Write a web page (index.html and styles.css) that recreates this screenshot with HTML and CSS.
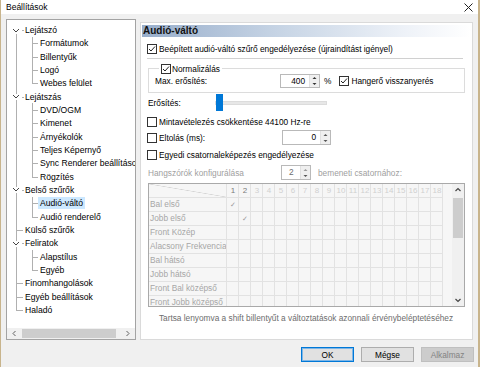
FILE: index.html
```html
<!DOCTYPE html>
<html>
<head>
    <meta charset="UTF-8">
    <title>Beállítások</title>
    <link rel="stylesheet" href="styles.css">
</head>
<body>
<div class="window">
    <div class="titlebar">
        <span class="title">Beállítások</span>
        <svg class="close" width="9" height="9" viewBox="0 0 9 9"><path d="M0.5 0.5 L8.5 8.5 M8.5 0.5 L0.5 8.5" stroke="#222" stroke-width="1" fill="none"/></svg>
    </div>

    <div class="main">
        <!-- bal oldali fa -->
        <div class="treebox">
            <ul class="tree">
                <li class="open first">
                    <div class="row"><svg class="twisty" width="8" height="6" viewBox="0 0 8 6"><rect width="8" height="6" fill="#fff"/><path d="M1 1 L4 4 L7 1" stroke="#444" fill="none"/></svg><span class="label">Lejátszó</span></div>
                    <ul>
                        <li><div class="row"><span class="label">Formátumok</span></div></li>
                        <li><div class="row"><span class="label">Billentyűk</span></div></li>
                        <li><div class="row"><span class="label">Logó</span></div></li>
                        <li><div class="row"><span class="label">Webes felület</span></div></li>
                    </ul>
                </li>
                <li class="open">
                    <div class="row"><svg class="twisty" width="8" height="6" viewBox="0 0 8 6"><rect width="8" height="6" fill="#fff"/><path d="M1 1 L4 4 L7 1" stroke="#444" fill="none"/></svg><span class="label">Lejátszás</span></div>
                    <ul>
                        <li><div class="row"><span class="label">DVD/OGM</span></div></li>
                        <li><div class="row"><span class="label">Kimenet</span></div></li>
                        <li><div class="row"><span class="label">Árnyékolók</span></div></li>
                        <li><div class="row"><span class="label">Teljes Képernyő</span></div></li>
                        <li><div class="row"><span class="label">Sync Renderer beállítások</span></div></li>
                        <li><div class="row"><span class="label">Rögzítés</span></div></li>
                    </ul>
                </li>
                <li class="open">
                    <div class="row"><svg class="twisty" width="8" height="6" viewBox="0 0 8 6"><rect width="8" height="6" fill="#fff"/><path d="M1 1 L4 4 L7 1" stroke="#444" fill="none"/></svg><span class="label">Belső szűrők</span></div>
                    <ul>
                        <li><div class="row"><span class="label selected">Audió-váltó</span></div></li>
                        <li><div class="row"><span class="label">Audió renderelő</span></div></li>
                    </ul>
                </li>
                <li><div class="row"><span class="label">Külső szűrők</span></div></li>
                <li class="open">
                    <div class="row"><svg class="twisty" width="8" height="6" viewBox="0 0 8 6"><rect width="8" height="6" fill="#fff"/><path d="M1 1 L4 4 L7 1" stroke="#444" fill="none"/></svg><span class="label">Feliratok</span></div>
                    <ul>
                        <li><div class="row"><span class="label">Alapstílus</span></div></li>
                        <li><div class="row"><span class="label">Egyéb</span></div></li>
                    </ul>
                </li>
                <li><div class="row"><span class="label">Finomhangolások</span></div></li>
                <li><div class="row"><span class="label">Egyéb beállítások</span></div></li>
                <li><div class="row"><span class="label">Haladó</span></div></li>
            </ul>
            <div class="hscroll">
                <svg width="11" height="11" viewBox="0 0 11 11"><path d="M6.5 3 L4 5.5 L6.5 8" stroke="#606060" fill="none"/></svg>
                <div class="hthumb"></div>
                <svg width="11" height="11" viewBox="0 0 11 11"><path d="M4.5 3 L7 5.5 L4.5 8" stroke="#606060" fill="none"/></svg>
            </div>
        </div>

        <!-- jobb oldali oldal -->
        <div class="page">
            <div class="page-head">Audió-váltó</div>
            <div class="page-body">
                <div class="line first-line">
                    <svg class="cb" width="10" height="10" viewBox="0 0 10 10"><rect x="0.5" y="0.5" width="9" height="9" fill="#fff" stroke="#333"/><path d="M2 5 L4 7 L8 2.5" stroke="#222" fill="none"/></svg>
                    <span>Beépített audió-váltó szűrő engedélyezése (újraindítást igényel)</span>
                </div>
                <div class="sep"></div>

                <div class="group">
                    <div class="legend">
                        <svg class="cb" width="10" height="10" viewBox="0 0 10 10"><rect x="0.5" y="0.5" width="9" height="9" fill="#fff" stroke="#333"/><path d="M2 5 L4 7 L8 2.5" stroke="#222" fill="none"/></svg>
                        <span>Normalizálás</span>
                    </div>
                    <div class="line max-row">
                        <span class="field-label">Max. erősítés:</span>
                        <div class="spin w40">
                            <span class="val">400</span>
                            <div class="spin-btns">
                                <svg width="7" height="6" viewBox="0 0 7 6"><path d="M1.5 4 L3.5 2 L5.5 4 Z" fill="#333"/></svg>
                                <svg width="7" height="6" viewBox="0 0 7 6"><path d="M1.5 2 L3.5 4 L5.5 2 Z" fill="#333"/></svg>
                            </div>
                        </div>
                        <span class="pct">%</span>
                        <svg class="cb" width="10" height="10" viewBox="0 0 10 10"><rect x="0.5" y="0.5" width="9" height="9" fill="#fff" stroke="#333"/><path d="M2 5 L4 7 L8 2.5" stroke="#222" fill="none"/></svg>
                        <span>Hangerő visszanyerés</span>
                    </div>
                </div>

                <div class="line slider-row">
                    <span class="slider-label">Erősítés:</span>
                    <div class="slider">
                        <div class="thumb"></div>
                    </div>
                </div>

                <div class="line gap4">
                    <svg class="cb" width="10" height="10" viewBox="0 0 10 10"><rect x="0.5" y="0.5" width="9" height="9" fill="#fff" stroke="#333"/></svg>
                    <span>Mintavételezés csökkentése 44100 Hz-re</span>
                </div>

                <div class="line spin-row">
                    <svg class="cb" width="10" height="10" viewBox="0 0 10 10"><rect x="0.5" y="0.5" width="9" height="9" fill="#fff" stroke="#333"/></svg>
                    <span class="cb-label">Eltolás (ms):</span>
                    <div class="spin w49">
                        <span class="val">0</span>
                        <div class="spin-btns">
                            <svg width="7" height="6" viewBox="0 0 7 6"><path d="M1.5 4 L3.5 2 L5.5 4 Z" fill="#555"/></svg>
                            <svg width="7" height="6" viewBox="0 0 7 6"><path d="M1.5 2 L3.5 4 L5.5 2 Z" fill="#555"/></svg>
                        </div>
                    </div>
                </div>

                <div class="line gap3">
                    <svg class="cb" width="10" height="10" viewBox="0 0 10 10"><rect x="0.5" y="0.5" width="9" height="9" fill="#fff" stroke="#333"/></svg>
                    <span>Egyedi csatornaleképezés engedélyezése</span>
                </div>

                <div class="line speaker-row disabled">
                    <span class="speaker-label">Hangszórók konfigurálása</span>
                    <div class="spin w30">
                        <span class="val">2</span>
                        <div class="spin-btns">
                            <svg width="7" height="6" viewBox="0 0 7 6"><path d="M1.5 4 L3.5 2 L5.5 4 Z" fill="#999"/></svg>
                            <svg width="7" height="6" viewBox="0 0 7 6"><path d="M1.5 2 L3.5 4 L5.5 2 Z" fill="#555"/></svg>
                        </div>
                    </div>
                    <span class="after-spin">bemeneti csatornához:</span>
                </div>

                <div class="matrix">
                    <div class="matrix-rows">
                        <div class="mrow head">
                            <span class="corner"></span>
                            <span class="on">1</span><span class="on">2</span><span>3</span><span>4</span><span>5</span><span>6</span><span>7</span><span>8</span><span>9</span><span>10</span><span>11</span><span>12</span><span>13</span><span>14</span><span>15</span><span>16</span><span>17</span><span>18</span>
                        </div>
                        <div class="mrow"><span class="name">Bal első</span><span class="tick c1">✓</span></div>
                        <div class="mrow"><span class="name">Jobb első</span><span class="tick c2">✓</span></div>
                        <div class="mrow"><span class="name">Front Közép</span></div>
                        <div class="mrow"><span class="name">Alacsony Frekvencia</span></div>
                        <div class="mrow"><span class="name">Bal hátsó</span></div>
                        <div class="mrow"><span class="name">Jobb hátsó</span></div>
                        <div class="mrow"><span class="name">Front Bal középső</span></div>
                        <div class="mrow"><span class="name">Front Jobb középső</span></div>
                    </div>
                    <div class="vscroll">
                        <svg width="12" height="12" viewBox="0 0 12 12"><path d="M3.5 7 L6 4.5 L8.5 7" stroke="#444" stroke-width="1.2" fill="none"/></svg>
                        <div class="vthumb"></div>
                        <div class="vspace"></div>
                        <svg width="12" height="12" viewBox="0 0 12 12"><path d="M3.5 5 L6 7.5 L8.5 5" stroke="#444" stroke-width="1.2" fill="none"/></svg>
                    </div>
                </div>

                <div class="hint">Tartsa lenyomva a shift billentyűt a változtatások azonnali érvénybeléptetéséhez</div>
            </div>
        </div>
    </div>

    <div class="buttons">
        <button class="btn default">OK</button>
        <button class="btn">Mégse</button>
        <button class="btn" disabled>Alkalmaz</button>
    </div>
</div>
</body>
</html>
```

FILE: styles.css
```css
body {
    margin: 0;
    padding: 0;
    font-family: "Liberation Sans", Arial, sans-serif;
    font-size: 8.3px;
    color: #000;
    background: #f0f0f0;
}

.window {
    width: 480px;
    height: 367px;
    box-sizing: border-box;
    border-left: 1px solid #c8b48c;
    border-right: 2px solid #c8b48c;
    background: #f0f0f0;
    overflow: hidden;
}

/* Címsor */
.titlebar {
    height: 14px;
    background: #fff;
    display: flex;
    align-items: center;
    padding-left: 5px;
}

.title {
    flex: 1;
    font-size: 8.5px;
}

.close {
    margin-right: 5px;
}

.main {
    display: flex;
    align-items: flex-start;
    padding-left: 5px;
    margin-top: 5px;
}

/* Fa nézet */
.treebox {
    width: 130px;
    height: 321px;
    box-sizing: border-box;
    border: 1px solid #a3a3a3;
    background: #fff;
    display: flex;
    flex-direction: column;
}

.tree {
    list-style: none;
    margin: 0;
    padding: 3.5px 0 0 0;
    flex: 1;
    overflow: hidden;
    white-space: nowrap;
    font-size: 8.6px;
}

.tree ul {
    list-style: none;
    margin: 0;
    padding: 0;
}

.tree li {
    position: relative;
}

.tree .row {
    height: 13.33px;
    line-height: 13.33px;
    padding-left: 18px;
    display: flex;
    align-items: center;
}

.tree li li .row {
    padding-left: 33px;
}

/* függőleges vonalak */
.tree > li::before {
    content: "";
    position: absolute;
    left: 9px;
    top: 0;
    bottom: 0;
    border-left: 1px solid #b0b0b0;
}

.tree > li.first::before {
    top: 7px;
}

.tree > li:last-child::before {
    bottom: auto;
    height: 7px;
}

.tree > li::after {
    content: "";
    position: absolute;
    left: 9px;
    top: 6.5px;
    width: 7px;
    border-top: 1px solid #b0b0b0;
}

.tree > li.open::after {
    left: 15px;
    width: 2px;
}

.tree li li::before {
    content: "";
    position: absolute;
    left: 25px;
    top: 0;
    bottom: 0;
    border-left: 1px solid #b0b0b0;
}

.tree li li:last-child::before {
    bottom: auto;
    height: 7px;
}

.tree li li::after {
    content: "";
    position: absolute;
    left: 25px;
    top: 6.5px;
    width: 6px;
    border-top: 1px solid #b0b0b0;
}

.twisty {
    position: absolute;
    left: 5px;
    top: 4px;
    z-index: 1;
}

.label {
    line-height: 12px;
}

.label.selected {
    background: #cce8ff;
    padding: 0 2px;
    margin-left: -2px;
}

.hscroll {
    height: 11px;
    background: #f0f0f0;
    display: flex;
    align-items: center;
    padding: 0 2px;
}

.hthumb {
    flex: 1;
    height: 9px;
    margin: 0 6px 0 2px;
    background: #cdcdcd;
}

/* Jobb oldal */
.page {
    width: 333px;
    height: 318px;
    box-sizing: border-box;
    margin-left: 4px;
    margin-top: 3px;
    border: 1px solid #dadada;
    background: #fff;
    padding: 2px 1px;
}

.page-head {
    height: 12px;
    line-height: 12px;
    font-size: 10px;
    font-weight: bold;
    padding-left: 1px;
    color: #111;
    background: linear-gradient(to right, #98aecb 0%, #c5d3e4 40%, #eef2f8 80%, #fff 100%);
}

.page-body {
    padding: 0 6px 0 5px;
}

.line {
    display: flex;
    align-items: center;
    height: 13px;
    white-space: nowrap;
}

.cb {
    flex: none;
    margin-right: 2px;
}

.first-line {
    margin-top: 5px;
}

.sep {
    margin-top: 3px;
    height: 1px;
    background: #d0d0d0;
    margin-right: 2px;
}

.group {
    margin: 9px 0 0 1px;
    border: 1px solid #dcdcdc;
    padding: 0 0 4px 6px;
    box-sizing: border-box;
    height: 25px;
}

.legend {
    display: flex;
    align-items: center;
    height: 10px;
    margin: -5px 0 0 4px;
    padding: 0 2px;
    background: #fff;
    width: fit-content;
}

.legend .cb {
    margin-right: 1px;
}

.max-row {
    height: 14px;
}

.field-label {
    width: 125px;
}

.spin {
    display: flex;
    align-items: stretch;
    height: 14px;
    box-sizing: border-box;
    border: 1px solid #b9b9b9;
    background: #fff;
}

.spin .val {
    flex: 1;
    text-align: right;
    padding-right: 4px;
    line-height: 12px;
}

.spin-btns {
    width: 9px;
    display: flex;
    flex-direction: column;
    justify-content: center;
    align-items: center;
    background: #efefef;
    border-left: 1px solid #e0e0e0;
}

.spin-btns svg {
    display: block;
}

.w40 { width: 40px; }
.w49 { width: 49px; height: 15px; }
.w30 { width: 30px; height: 15px; }

.pct {
    margin: 0 8px 0 4px;
}

.slider-row {
    height: 17px;
    margin-top: 1px;
}

.slider-label {
    width: 67px;
    padding-left: 1px;
}

.slider {
    width: 110px;
    height: 2px;
    background: #e7e7e7;
    border: 1px solid #dcdcdc;
    display: flex;
    align-items: center;
}

.thumb {
    width: 7px;
    height: 17px;
    flex: none;
    background: #0078d7;
}

.gap4 { margin-top: 4px; }
.gap3 { margin-top: 3px; }

.spin-row {
    height: 15px;
    margin-top: 2px;
}

.cb-label {
    width: 123px;
}

.speaker-row {
    height: 15px;
    margin-top: 4px;
}

.disabled {
    color: #a0a0a0;
}

.speaker-label {
    width: 133px;
    padding-left: 1px;
}

.disabled .spin .val {
    color: #6d6d6d;
    text-align: left;
    padding-left: 7px;
}

.after-spin {
    margin-left: 7px;
}

/* Csatorna mátrix */
.matrix {
    margin: 3px 0 0 1px;
    height: 124px;
    box-sizing: border-box;
    border: 1px solid #a9a9a9;
    background: #f6f6f6;
    display: flex;
    overflow: hidden;
}

.matrix-rows {
    flex: 1;
    overflow: hidden;
}

.mrow {
    display: grid;
    grid-template-columns: 78px repeat(18, 12px);
    width: 294px;
    height: 14px;
    box-sizing: border-box;
    border-bottom: 1px solid #e2e2e2;
    background-image: linear-gradient(to right, transparent 11px, #e2e2e2 11px);
    background-size: 12px 100%;
    background-position: 78px 0;
    color: #a6a6a6;
    line-height: 13px;
}

.mrow .name,
.mrow .corner {
    grid-column: 1;
    background-color: #f6f6f6;
    border-right: 1px solid #e2e2e2;
    padding-left: 1px;
    white-space: nowrap;
    overflow: hidden;
}

.corner {
    background-image: linear-gradient(to top right, transparent calc(50% - 0.6px), #d4d4d4 50%, transparent calc(50% + 0.6px));
}

.head span {
    text-align: center;
    color: #d0d0d0;
    font-size: 8px;
}

.head span.on {
    color: #7a7a7a;
}

.tick {
    text-align: center;
    color: #9a9a9a;
    font-size: 7px;
}

.c1 { grid-column: 2; }
.c2 { grid-column: 3; }

.vscroll {
    width: 12px;
    background: #f0f0f0;
    display: flex;
    flex-direction: column;
}

.vscroll svg {
    display: block;
}

.vthumb {
    height: 40px;
    margin: 2px 1px 0 1px;
    background: #cdcdcd;
}

.vspace {
    flex: 1;
}

.hint {
    margin-top: 5px;
    line-height: 13px;
    text-align: center;
    color: #6d6d6d;
}

/* Gombok */
.buttons {
    display: flex;
    justify-content: flex-end;
    gap: 7px;
    margin-top: 7px;
    padding-right: 4px;
}

.btn {
    width: 53px;
    height: 15px;
    padding: 0;
    font-family: "Liberation Sans", Arial, sans-serif;
    font-size: 8.3px;
    color: #000;
    background: #e1e1e1;
    border: 1px solid #adadad;
}

.btn.default {
    border-color: #0078d7;
    box-shadow: inset 0 0 0 1px #7fb6e6;
}

.btn:disabled {
    background: #cccccc;
    border-color: #bfbfbf;
    color: #838383;
}
```
